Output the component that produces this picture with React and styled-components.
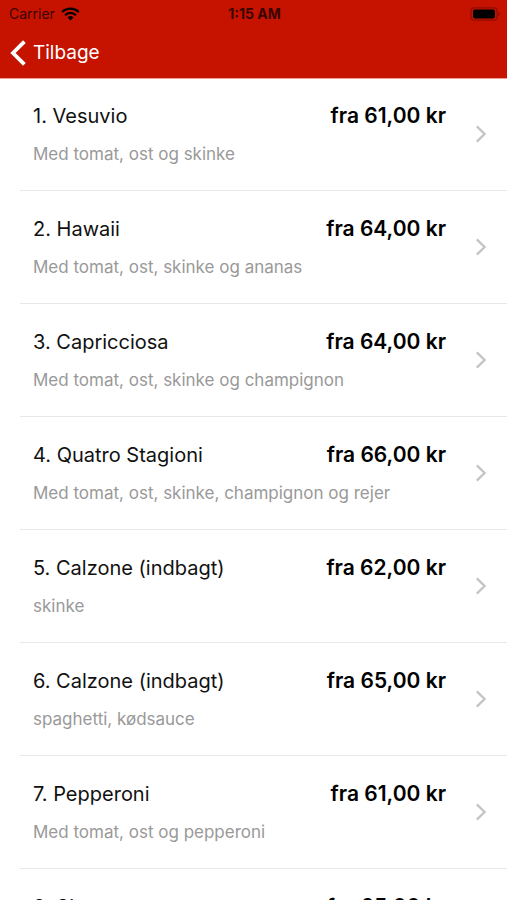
import React from "react";
import styled, { createGlobalStyle, ThemeProvider } from "styled-components";

const GlobalStyle = createGlobalStyle`
  * {
    box-sizing: border-box;
  }
  html {
    scrollbar-width: none;
  }
  body {
    margin: 0;
    background: #fff;
    font-family: Inter, "Liberation Sans", sans-serif;
  }
`;

const theme = {
  brand: "#c51300",
  brandEdge: "#ee9d95",
  text: "#111",
  muted: "#999",
  line: "#e8e8e8",
  arrow: "#c4c4c6"
};

const Header = styled.header`
  position: sticky;
  top: 0;
  z-index: 1;
  background: ${props => props.theme.brand};
  box-shadow: 0 1px 0 ${props => props.theme.brandEdge};
`;

const StatusBar = styled.div`
  display: grid;
  grid-template-columns: 1fr auto 1fr;
  align-items: center;
  height: 27px;
  padding: 0 7px 0 9px;
  font-size: 14px;
  color: #3a0400;
`;

const Carrier = styled.div`
  display: flex;
  align-items: center;
  gap: 6px;
`;

const Clock = styled.time`
  font-weight: 700;
`;

const Battery = styled.svg`
  justify-self: end;
`;

const NavBar = styled.nav`
  display: flex;
  align-items: center;
  height: 51px;
  padding: 0 10px;
`;

const BackButton = styled.button`
  display: flex;
  align-items: center;
  gap: 7px;
  padding: 0;
  border: 0;
  background: none;
  color: #fff;
  font-family: inherit;
  font-size: 19px;
  line-height: 24px;
  cursor: pointer;
`;

const Menu = styled.ul`
  margin: 0;
  padding: 0 0 0 20px;
  list-style: none;
`;

const MenuItem = styled.li`
  border-bottom: 1px solid ${props => props.theme.line};
`;

const MenuLink = styled.a`
  display: flex;
  align-items: center;
  gap: 29px;
  height: 112px;
  padding: 0 20px 0 13px;
  color: ${props => props.theme.text};
  text-decoration: none;
`;

const Details = styled.div`
  flex: 1;
`;

const TopLine = styled.div`
  display: flex;
  justify-content: space-between;
  line-height: 24px;
`;

const Name = styled.span`
  font-size: 20px;
`;

const Price = styled.span`
  color: #000;
  font-size: 21px;
  font-weight: 600;
`;

const Description = styled.p`
  min-height: 20px;
  margin: 16px 0 0;
  color: ${props => props.theme.muted};
  font-size: 17px;
  line-height: 20px;
`;

const pizzas = [
  { name: "1. Vesuvio", price: "61,00", text: "Med tomat, ost og skinke" },
  { name: "2. Hawaii", price: "64,00", text: "Med tomat, ost, skinke og ananas" },
  { name: "3. Capricciosa", price: "64,00", text: "Med tomat, ost, skinke og champignon" },
  { name: "4. Quatro Stagioni", price: "66,00", text: "Med tomat, ost, skinke, champignon og rejer" },
  { name: "5. Calzone (indbagt)", price: "62,00", text: "skinke" },
  { name: "6. Calzone (indbagt)", price: "65,00", text: "spaghetti, kødsauce" },
  { name: "7. Pepperoni", price: "61,00", text: "Med tomat, ost og pepperoni" },
  { name: "8. Sirena", price: "65,00", text: "" }
];

const Wifi = () => (
  <svg width="19" height="14" viewBox="0 0 19 14" fill="none" stroke="#000" strokeWidth="2.2" aria-hidden="true">
    <path d="M1.2 5 A11.8 11.8 0 0 1 17.8 5" />
    <path d="M4.1 8.2 A7.6 7.6 0 0 1 14.9 8.2" />
    <path d="M6.6 10.5 A4.2 4.2 0 0 1 12.4 10.5 L9.5 13.6 Z" fill="#000" stroke="none" />
  </svg>
);

const Arrow = styled.svg`
  flex: none;
  fill: none;
  stroke: ${props => props.theme.arrow};
  stroke-width: 2.3;
`;

const App = () => (
  <ThemeProvider theme={theme}>
    <GlobalStyle />
    <Header>
      <StatusBar>
        <Carrier>
          Carrier
          <Wifi />
        </Carrier>
        <Clock>1:15 AM</Clock>
        <Battery width="30" height="14" viewBox="0 0 30 14" aria-hidden="true">
          <rect x="1" y="0.8" width="26" height="12.4" rx="3.5" fill="none" stroke="#8f0d00" strokeWidth="1.2" />
          <rect x="3" y="2.4" width="22" height="9" rx="1.8" fill="#000" />
          <path d="M28.4 4.8 a2.4 2.4 0 0 1 0 4.4 Z" fill="#8f0d00" />
        </Battery>
      </StatusBar>
      <NavBar>
        <BackButton type="button">
          <svg width="16" height="26" viewBox="0 0 16 26" fill="none" stroke="#fff" strokeWidth="3.8" aria-hidden="true">
            <path d="M14.4 1.6 L3 13 L14.4 24.4" />
          </svg>
          Tilbage
        </BackButton>
      </NavBar>
    </Header>
    <Menu>
      {pizzas.map(pizza => (
        <MenuItem key={pizza.name}>
          <MenuLink href="#">
            <Details>
              <TopLine>
                <Name>{pizza.name}</Name>
                <Price>fra {pizza.price} kr</Price>
              </TopLine>
              <Description>{pizza.text}</Description>
            </Details>
            <Arrow width="12" height="18" viewBox="0 0 12 18" aria-hidden="true">
              <path d="M1.8 1.4 L9.6 9 L1.8 16.6" />
            </Arrow>
          </MenuLink>
        </MenuItem>
      ))}
    </Menu>
  </ThemeProvider>
);

export default App;
